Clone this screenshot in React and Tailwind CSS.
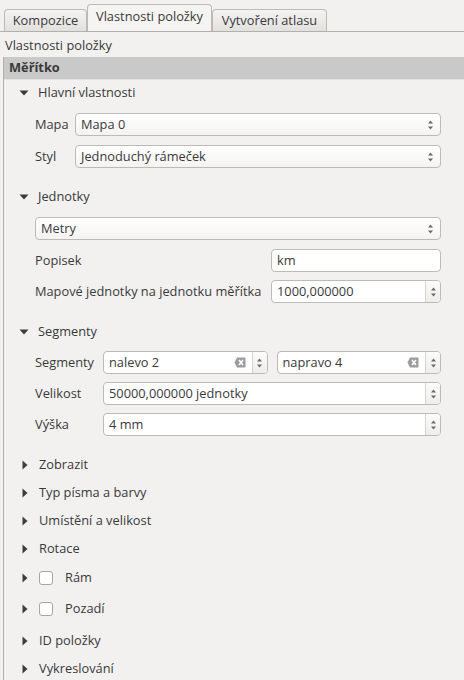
import React from "react";

const font = { fontFamily: "'Open Sans', 'DejaVu Sans', sans-serif" };

const SpinArrows = () => (
  <svg width="7" height="12" viewBox="0 0 7 12" className="text-[#6a6a6a]">
    <path d="M3.5 1.5L6 4.5H1Z" fill="currentColor" />
    <path d="M3.5 10.5L6 7.5H1Z" fill="currentColor" />
  </svg>
);

const Down = () => (
  <svg width="10" height="8" viewBox="0 0 10 8" className="shrink-0">
    <path d="M0.5 1.5H9.5L5 6.5Z" fill="#3c3c3c" />
  </svg>
);

const Right = () => (
  <svg width="8" height="10" viewBox="0 0 8 10" className="shrink-0">
    <path d="M1.5 0.5V9.5L6.5 5Z" fill="#3c3c3c" />
  </svg>
);

const ClearIcon = () => (
  <svg width="12" height="11" viewBox="0 0 12 11">
    <path d="M3 0.5H10.5Q11.5 0.5 11.5 1.5V9.5Q11.5 10.5 10.5 10.5H3L0.5 5.5Z" fill="#9c9c9c" />
    <path d="M5 3L9 8M9 3L5 8" stroke="#fff" strokeWidth="1.6" />
  </svg>
);

const Combo = ({ value, className = "" }) => (
  <div
    className={`h-[23px] flex items-center justify-between rounded-[4px] border border-[#bdbab6] bg-gradient-to-b from-white to-[#f4f3f2] pl-[5px] pr-[6px] ${className}`}
  >
    <span>{value}</span>
    <SpinArrows />
  </div>
);

const Spin = ({ value, clear, className = "" }) => (
  <div
    className={`h-[23px] flex rounded-[4px] border border-[#bdbab6] bg-white overflow-hidden ${className}`}
  >
    <div className="flex-1 flex items-center justify-between pl-[5px] pr-[6px]">
      <span>{value}</span>
      {clear && <ClearIcon />}
    </div>
    <div className="w-[15px] flex items-center justify-center border-l border-[#d6d3cf] bg-gradient-to-b from-[#fbfbfa] to-[#eeedeb]">
      <SpinArrows />
    </div>
  </div>
);

const Input = ({ value, className = "" }) => (
  <div
    className={`h-[23px] flex items-center rounded-[4px] border border-[#bdbab6] bg-white pl-[5px] ${className}`}
  >
    {value}
  </div>
);

const GroupHead = ({ label, className = "" }) => (
  <div className={`h-[20px] flex items-center pl-[15px] gap-[9px] ${className}`}>
    <Down />
    <span>{label}</span>
  </div>
);

const Collapsed = ({ label, check, className = "" }) => (
  <div className={`h-[20px] flex items-center pl-[17px] ${className}`}>
    <Right />
    {check ? (
      <>
        <div className="ml-[10px] w-[14px] h-[14px] rounded-[3px] border border-[#a9a6a2] bg-white" />
        <span className="ml-[12px]">{label}</span>
      </>
    ) : (
      <span className="ml-[10px]">{label}</span>
    )}
  </div>
);

export default function App() {
  return (
    <div
      className="w-[464px] h-[680px] bg-[#f2f1f0] text-[#3a3a3a] text-[12.8px] overflow-hidden flex flex-col"
      style={font}
    >
      {/* tabs */}
      <div className="h-[32px] flex items-end pl-[4px] border-b border-[#b3b0ac] shrink-0">
        <div className="h-[22px] w-[83px] flex items-center justify-center rounded-t-[4px] border border-b-0 border-[#bdbab6] bg-gradient-to-b from-[#f4f3f2] to-[#e3e1de]">
          Kompozice
        </div>
        <div className="h-[27px] w-[125px] flex items-center justify-center rounded-t-[4px] border border-b-0 border-[#bdbab6] bg-[#f5f4f3] pb-[3px]">
          Vlastnosti položky
        </div>
        <div className="h-[22px] w-[115px] flex items-center justify-center rounded-t-[4px] border border-b-0 border-[#bdbab6] bg-gradient-to-b from-[#f4f3f2] to-[#e3e1de]">
          Vytvoření atlasu
        </div>
      </div>

      <div className="h-[25px] flex items-center pl-[5px] pt-[2px] shrink-0">
        Vlastnosti položky
      </div>

      <div className="flex-1 border-l border-[#b3b0ac] ml-[3px]">
        <div className="h-[23px] bg-[#c9c9c9] flex items-center pl-[5px] font-bold border-b border-[#e2e1df]">
          Měřítko
        </div>

        <div className="flex flex-col pr-[23px]">
          <GroupHead label="Hlavní vlastnosti" className="mt-[3px]" />
          <div className="mt-[10px] flex items-center pl-[31px]">
            <span className="w-[40px]">Mapa</span>
            <Combo value="Mapa 0" className="flex-1" />
          </div>
          <div className="mt-[9px] flex items-center pl-[31px]">
            <span className="w-[40px]">Styl</span>
            <Combo value="Jednoduchý rámeček" className="flex-1" />
          </div>

          <GroupHead label="Jednotky" className="mt-[19px]" />
          <div className="mt-[10px] pl-[31px]">
            <Combo value="Metry" />
          </div>
          <div className="mt-[9px] flex items-center pl-[31px]">
            <span className="flex-1">Popisek</span>
            <Input value="km" className="w-[170px]" />
          </div>
          <div className="mt-[8px] flex items-center pl-[31px]">
            <span className="flex-1">Mapové jednotky na jednotku měřítka</span>
            <Spin value="1000,000000" className="w-[170px]" />
          </div>

          <GroupHead label="Segmenty" className="mt-[19px]" />
          <div className="mt-[9px] flex items-center pl-[31px]">
            <span className="w-[68px]">Segmenty</span>
            <Spin value="nalevo 2" clear className="flex-1" />
            <Spin value="napravo 4" clear className="flex-1 ml-[9px]" />
          </div>
          <div className="mt-[8px] flex items-center pl-[31px]">
            <span className="w-[68px]">Velikost</span>
            <Spin value="50000,000000 jednotky" className="flex-1" />
          </div>
          <div className="mt-[8px] flex items-center pl-[31px]">
            <span className="w-[68px]">Výška</span>
            <Spin value="4 mm" className="flex-1" />
          </div>

          <Collapsed label="Zobrazit" className="mt-[19px]" />
          <Collapsed label="Typ písma a barvy" className="mt-[8px]" />
          <Collapsed label="Umístění a velikost" className="mt-[8px]" />
          <Collapsed label="Rotace" className="mt-[8px]" />
          <Collapsed label="Rám" check className="mt-[9px]" />
          <Collapsed label="Pozadí" check className="mt-[11px]" />
          <Collapsed label="ID položky" className="mt-[12px]" />
          <Collapsed label="Vykreslování" className="mt-[8px]" />
        </div>
      </div>
    </div>
  );
}
